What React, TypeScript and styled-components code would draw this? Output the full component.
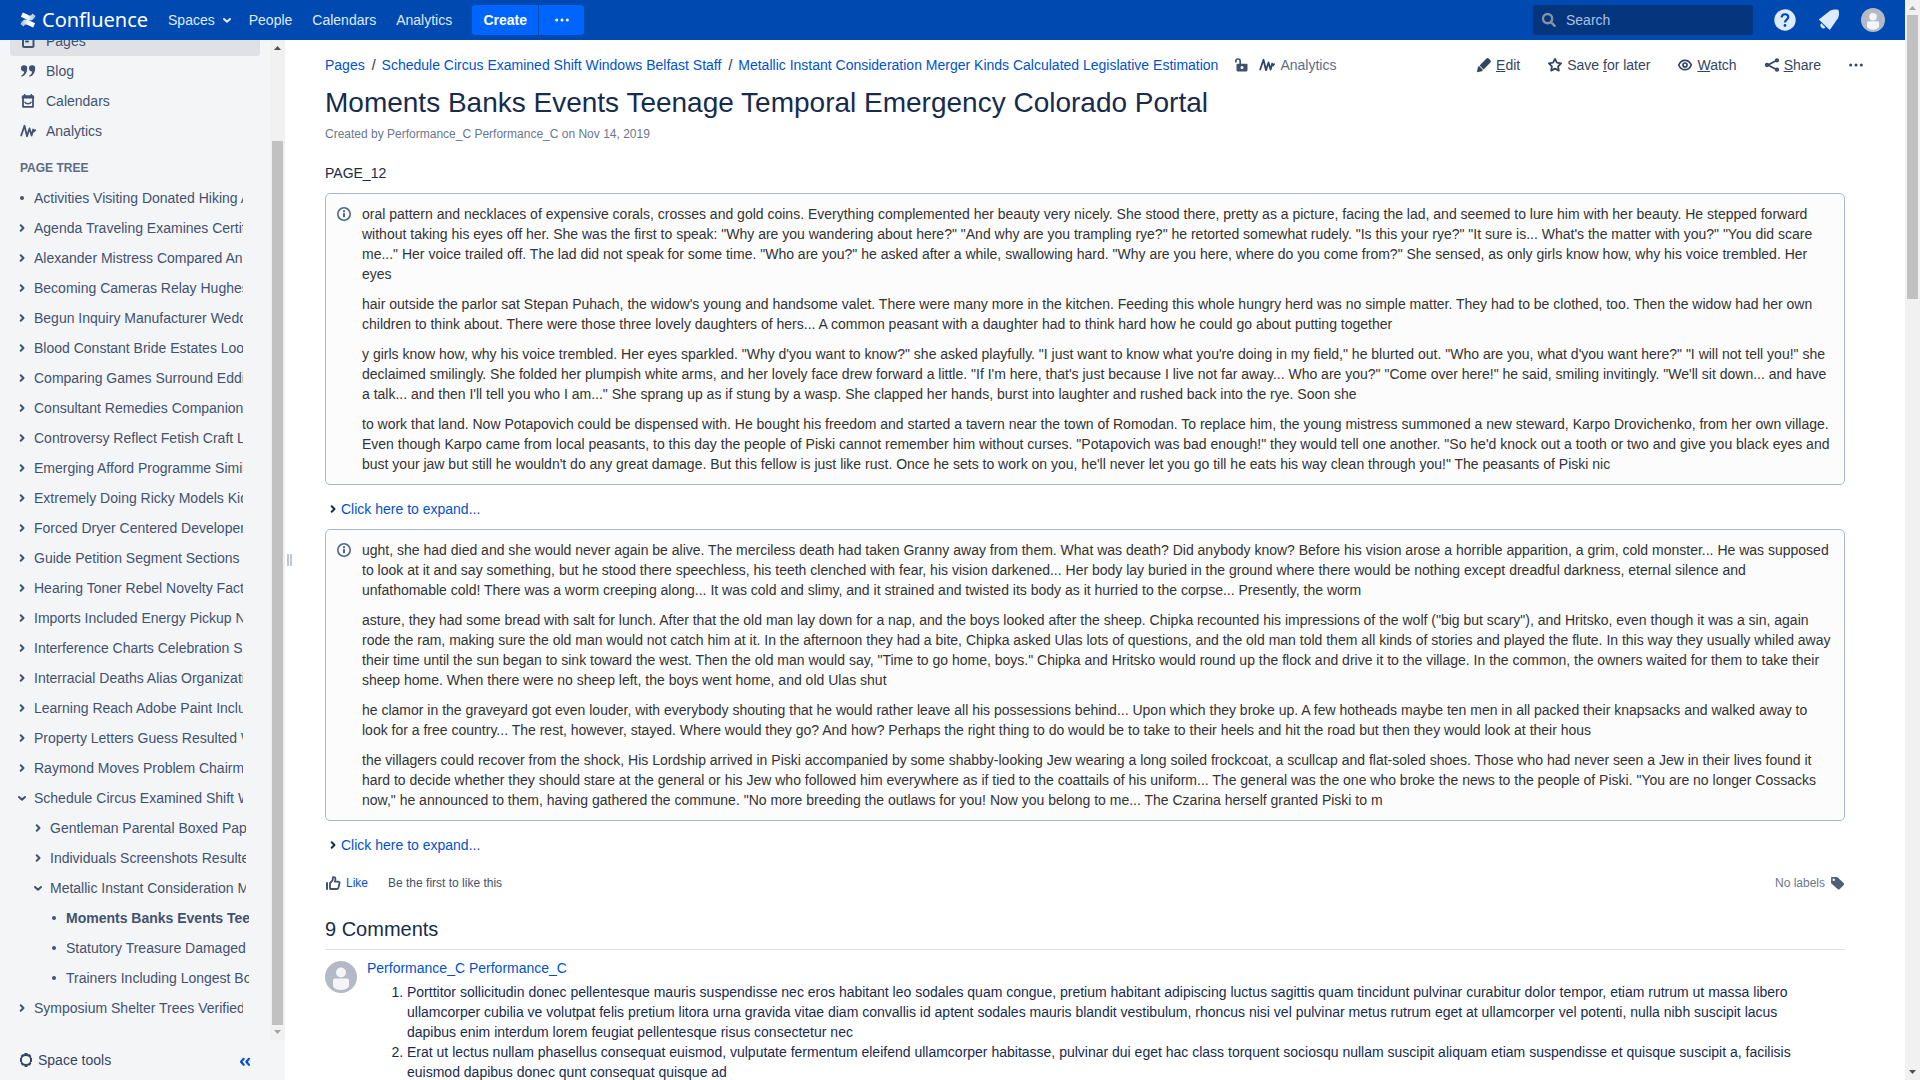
import React from "react";
import styled, { createGlobalStyle } from "styled-components";

const GlobalStyle = createGlobalStyle`
  *, *::before, *::after { box-sizing: border-box; }
  body {
    margin: 0;
    overflow: hidden;
    background: #fff;
    color: #172b4d;
    font-family: "Liberation Sans", Arial, sans-serif;
    font-size: 14px;
    line-height: 20px;
  }
  button, input { font: inherit; }
  svg { display: block; flex: none; }
`;

const Window = styled.div`
  display: grid;
  grid-template-columns: minmax(0, 1fr) 15px;
  grid-template-rows: minmax(0, 1fr);
  height: 100vh;
`;

const Page = styled.div`
  display: grid;
  grid-template-rows: 40px minmax(0, 1fr);
  min-height: 0;
`;

const Body = styled.div`
  display: grid;
  grid-template-columns: 285px minmax(0, 1fr);
  grid-template-rows: minmax(0, 1fr);
  min-height: 0;
`;

/* Header */

const Header = styled.header`
  display: flex;
  align-items: center;
  padding: 0 20px;
  background: #0049b0;
  color: #deebff;
`;

const Logo = styled.a`
  display: flex;
  align-items: center;
  gap: 6px;
  margin-right: 10px;
  color: #fff;
  font-family: "Noto Sans", sans-serif;
  font-size: 20px;
  text-decoration: none;
`;

const NavLink = styled.a`
  padding: 0 10px;
  color: #deebff;
  text-decoration: none;
`;

const NavMenu = styled.button`
  display: flex;
  align-items: center;
  gap: 4px;
  padding: 0 4px 0 10px;
  border: 0;
  background: none;
  color: #deebff;
`;

const CreateGroup = styled.div`
  display: flex;
  gap: 1px;
  margin: 0 auto 0 10px;
`;

const CreateButton = styled.button<{ $side: "left" | "right" }>`
  display: flex;
  align-items: center;
  justify-content: center;
  width: ${(p) => (p.$side === "left" ? 66 : 45)}px;
  height: 30px;
  padding: 0;
  border: 0;
  border-radius: ${(p) => (p.$side === "left" ? "3px 0 0 3px" : "0 3px 3px 0")};
  background: #0065ff;
  color: #fff;
  font-weight: bold;
`;

const SearchBox = styled.label`
  display: flex;
  align-items: center;
  gap: 9px;
  width: 220px;
  height: 30px;
  margin-right: 20px;
  padding: 0 8px;
  border-radius: 3px;
  background: #04357d;
  color: #8993a4;
`;

const SearchInput = styled.input`
  flex: 1;
  min-width: 0;
  padding: 0;
  border: 0;
  outline: 0;
  background: none;
  color: #deebff;
  &::placeholder { color: #a9c0e4; opacity: 1; }
`;

const HeaderTools = styled.div`
  display: flex;
  gap: 20px;
`;

const IconButton = styled.button`
  display: flex;
  padding: 0;
  border: 0;
  background: none;
  color: inherit;
`;

/* Sidebar */

const Sidebar = styled.aside`
  display: grid;
  grid-template-rows: minmax(0, 1fr) 40px;
  background: #f4f5f7;
  color: #42526e;
`;

const SidebarScroller = styled.div`
  display: grid;
  grid-template-columns: 270px 15px;
  grid-template-rows: minmax(0, 1fr);
  min-height: 0;
`;

const SidebarContent = styled.div`
  display: flex;
  flex-direction: column;
  justify-content: flex-end;
  padding-bottom: 17px;
  overflow: hidden;
`;

const PlainList = styled.ul`
  margin: 0;
  padding: 0;
  list-style: none;
`;

const SpaceLink = styled.a<{ $active?: boolean }>`
  display: flex;
  align-items: center;
  gap: 10px;
  height: 30px;
  margin: 0 10px;
  padding: 0 10px;
  border-radius: 3px;
  background: ${(p) => (p.$active ? "#dfe1e5" : "none")};
  color: #42526e;
  text-decoration: none;
`;

const TreeHeading = styled.h2`
  margin: 12px 20px 5px;
  color: #5e6c84;
  font-size: 12px;
  line-height: 20px;
`;

const TreeRow = styled.li<{ $level: number }>`
  display: flex;
  align-items: center;
  gap: 4px;
  height: 30px;
  padding-left: ${(p) => 14 + p.$level * 16}px;
  padding-right: ${(p) => 27 - p.$level * 3}px;
`;

const TreeToggle = styled(IconButton)`
  width: 16px;
`;

const TreeLink = styled.a<{ $current?: boolean }>`
  flex: 1;
  overflow: hidden;
  color: #42526e;
  font-weight: ${(p) => (p.$current ? "bold" : "normal")};
  text-decoration: none;
  white-space: nowrap;
`;

const SidebarFooter = styled.div`
  display: flex;
  align-items: center;
  justify-content: space-between;
  padding: 0 32px 0 18px;
`;

const SpaceTools = styled(IconButton)`
  align-items: center;
  gap: 4px;
  color: #344563;
`;

const Collapse = styled(IconButton)`
  color: #0052cc;
`;

/* Scrollbars */

const Track = styled.div`
  display: flex;
  flex-direction: column;
  align-items: center;
  background: #f1f1f1;
`;

const TrackArrow = styled.svg<{ $dim?: boolean }>`
  fill: ${(p) => (p.$dim ? "#a3a3a3" : "#505050")};
`;

const TrackSpace = styled.div<{ $share: number }>`
  flex: ${(p) => p.$share} 1 0;
`;

const Thumb = styled(TrackSpace)`
  width: 11px;
  background: #c1c1c1;
`;

/* Content */

const Main = styled.main`
  display: grid;
  grid-template-columns: 40px minmax(0, 1fr);
  grid-template-rows: minmax(0, 1fr);
  overflow: hidden;
`;

const Splitter = styled.div`
  display: flex;
  align-items: center;
  gap: 1px;
  padding-left: 2px;
`;

const SplitterBar = styled.span`
  width: 2px;
  height: 12px;
  background: #c1c7d0;
`;

const Article = styled.article`
  min-width: 0;
  padding: 10px 60px 0 0;
`;

const TopBar = styled.div`
  display: flex;
  align-items: center;
  justify-content: space-between;
  height: 30px;
  margin-right: -19px;
`;

const Breadcrumbs = styled.nav`
  display: flex;
  align-items: center;
  white-space: nowrap;
`;

const Separator = styled.span`
  margin: 0 6px 0 7px;
`;

const Link = styled.a`
  color: #0052cc;
  text-decoration: none;
`;

const PageMeta = styled.div`
  display: flex;
  align-items: center;
  gap: 10px;
  margin-left: 15px;
  color: #42526e;
`;

const ActionButton = styled.button<{ $muted?: boolean }>`
  display: flex;
  align-items: center;
  gap: ${(p) => (p.$muted ? 5 : 4)}px;
  padding: 0;
  border: 0;
  background: none;
  color: ${(p) => (p.$muted ? "#5e6c84" : "#344563")};
  white-space: nowrap;
  svg { color: #344563; }
`;

const Actions = styled.div`
  display: flex;
  gap: 27px;
`;

const Title = styled.h1`
  margin: 7px 0 5px;
  font-size: 28px;
  font-weight: normal;
  line-height: 32px;
`;

const Byline = styled.p`
  margin: 0;
  color: #6b778c;
  font-size: 12px;
`;

const Lead = styled.p`
  margin: 19px 0 10px;
`;

const InfoPanel = styled.section`
  display: grid;
  grid-template-columns: 16px minmax(0, 1fr);
  gap: 10px;
  padding: 10px;
  border: 1px solid #aab8c6;
  border-radius: 5px;
  background: #fcfcfc;
  color: #333;
`;

const InfoMark = styled.span`
  padding-top: 2px;
  color: #4a6785;
`;

const InfoText = styled.div`
  p { margin: 0 0 10px; }
  p:last-child { margin: 0; }
`;

const Expander = styled.button`
  display: flex;
  align-items: center;
  margin: 14px 0 10px;
  padding: 0;
  border: 0;
  background: none;
  color: #172b4d;
  span { color: #0052cc; }
`;

const LikeRow = styled.div`
  display: flex;
  align-items: center;
  margin-top: 18px;
  color: #42526e;
  font-size: 12px;
`;

const LikeButton = styled(IconButton)`
  align-items: center;
  gap: 5px;
  margin-right: 20px;
  span { color: #0052cc; }
`;

const Labels = styled.span`
  display: flex;
  align-items: center;
  gap: 4px;
  margin-left: auto;
  color: #6b778c;
  svg { color: #505f79; }
`;

const CommentsTitle = styled.h2`
  margin: 24px 0 11px;
  padding-bottom: 8px;
  border-bottom: 1px solid #dfe1e6;
  font-size: 20px;
  font-weight: normal;
  line-height: 24px;
`;

const Comment = styled.div`
  display: grid;
  grid-template-columns: 32px minmax(0, 1fr);
  gap: 10px;
  padding-right: 25px;
`;

const CommentAuthor = styled.h3`
  margin: -3px 0 4px;
  font-size: 14px;
  font-weight: normal;
`;

const CommentList = styled.ol`
  margin: 0;
  padding-left: 40px;
`;

/* Icons */

type IconProps = { size?: number; children: React.ReactNode; box?: number };

const Solid = ({ size = 16, box = 16, children }: IconProps) => (
  <svg width={size} height={size} viewBox={`0 0 ${box} ${box}`} fill="currentColor" aria-hidden="true">
    {children}
  </svg>
);

const Line = ({ size = 16, box = 16, width = 2, children }: IconProps & { width?: number }) => (
  <svg
    width={size}
    height={size}
    viewBox={`0 0 ${box} ${box}`}
    fill="none"
    stroke="currentColor"
    strokeWidth={width}
    strokeLinecap="round"
    strokeLinejoin="round"
    aria-hidden="true"
  >
    {children}
  </svg>
);

const ChevronRight = () => <Line><path d="M6.700 5.200 9.500 8l-2.800 2.800" /></Line>;
const ChevronDown = () => <Line><path d="M5 7l3 2.800L11 7" /></Line>;
const Bullet = () => <Solid><circle cx="8" cy="8" r="2" /></Solid>;
const Dots = () => (
  <Solid>
    <circle cx="2.700" cy="8" r="1.500" />
    <circle cx="8" cy="8" r="1.500" />
    <circle cx="13.300" cy="8" r="1.500" />
  </Solid>
);
const Pulse = () => (
  <Line width={1.800}><path d="M1.200 12.500 4.500 2.800 7 13.200 9.500 5.400l2.100 7.200L13.200 6.500l.6 2 1.300-1.300" /></Line>
);
const PagesIcon = () => (
  <Line>
    <rect x="3" y="2" width="10.500" height="12" rx="1" />
    <path d="M6 5.500h5M6 8.500h2" />
  </Line>
);
const Quotes = () => (
  <Solid>
    <path d="M4 2.200a3.100 3.100 0 0 1 3.200 3.300c0 4-2 6.900-5 8.100-.7.200-1.300-.6-.7-1.100 1.700-1.200 2.500-2.500 2.700-4.100A3.100 3.100 0 1 1 4 2.200zM12 2.200a3.100 3.100 0 0 1 3.200 3.300c0 4-2 6.900-5 8.100-.7.200-1.300-.6-.7-1.100 1.700-1.200 2.500-2.500 2.700-4.100a3.100 3.100 0 1 1-.2-6.200z" />
  </Solid>
);
const CalendarIcon = () => (
  <Line width={1.800}>
    <path d="M3 3.200h10v10.600H3z" />
    <path d="M3 4.200h10" strokeWidth="2.600" />
    <path d="M4.700 1.900v2M11.300 1.900v2" />
    <path d="M5 9.200c.8 2.200 5.200 2.200 6 0" strokeWidth="1.500" />
  </Line>
);
const Gear = () => (
  <Solid>
    <path
      fillRule="evenodd"
      d="M6.600 1h2.800l.5 1.400 1.400-.5 2 2-.6 1.400 1.300.7v3.800l-1.300.5.6 1.500-2 2-1.500-.6L9.300 15H6.700l-.5-1.800-1.500.6-2-2 .6-1.500L2 9.700V6l1.300-.7-.6-1.400 2-2 1.400.5zM8 3.900a4.100 4.100 0 1 0 0 8.200 4.100 4.100 0 0 0 0-8.200z"
    />
  </Solid>
);
const DoubleLeft = () => (
  <Line width={2.200}><path d="M6.700 6.800 4 9.800l2.700 3M12 6.800l-2.700 3 2.700 3" /></Line>
);
const Unlock = () => (
  <Solid>
    <path
      fillRule="evenodd"
      d="M5.500 6.700h8a1 1 0 0 1 1 1V13a1.500 1.500 0 0 1-1.500 1.500H5A1.500 1.500 0 0 1 3.500 13V7.700a1 1 0 0 1 1-1zM9 9a1.500 1.500 0 1 0 0 3 1.500 1.500 0 0 0 0-3z"
    />
    <path d="M2.800 5.500V4.200a2.200 2.200 0 0 1 4.400 0V7" fill="none" stroke="currentColor" strokeWidth="1.700" />
  </Solid>
);
const Pencil = () => (
  <Solid>
    <path d="M1.800 10.200 3 9l4 4-1.200 1.200L1 15.200zM3.600 8.400l6.600-6.600c1-1 2-.8 2.800 0l1.200 1.200c.9.900.9 1.900 0 2.800l-6.600 6.600z" />
  </Solid>
);
const Star = () => (
  <Line width={1.800}><path d="M8 1.900 9.900 5.700l4.200.6-3 3 .7 4.300L8 11.600l-3.800 2 .7-4.300-3-3 4.200-.6z" /></Line>
);
const Eye = () => (
  <Line width={1.700}>
    <path d="M1.700 8C3 5 5.200 3.300 8 3.300S13 5 14.300 8C13 11 10.800 12.700 8 12.700S3 11 1.700 8z" />
    <circle cx="8" cy="8" r="2" />
  </Line>
);
const ShareIcon = () => (
  <Line width={1.700}>
    <path d="M12 3.700 4 8l8 4.300" />
    <circle cx="13" cy="3.300" r="1.300" />
    <circle cx="3" cy="8" r="1.300" />
    <circle cx="13" cy="12.700" r="1.300" />
  </Line>
);
const Info = () => (
  <Line width={1.600}>
    <circle cx="8" cy="8" r="6.200" />
    <path d="M8 7.200v4M8 4.200v2" strokeLinecap="butt" strokeWidth="2" />
  </Line>
);
const ThumbUp = () => (
  <Line>
    <path d="M2 8v6" />
    <path d="M5 13.500V8l2.400-2.300.7-3.500c1.900-.5 2.600.8 2.300 2.200L9.900 6.700h3.300c1 0 1.500.7 1.300 1.500l-1.100 4.500c-.2.800-.7 1.300-1.600 1.300H5.500z" strokeWidth="1.800" />
  </Line>
);
const Tag = () => (
  <Solid>
    <path
      fillRule="evenodd"
      d="M2.200 2h5.200c.6 0 1 .2 1.400.6l6 5.700c.5.500.5 1.100 0 1.600l-4.300 4.300c-.5.500-1.100.5-1.600 0L2.600 8.800C2.200 8.400 2 8 2 7.500zM4.700 3.500a1.200 1.200 0 1 0 0 2.400 1.200 1.200 0 0 0 0-2.400z"
    />
  </Solid>
);
const Magnifier = () => (
  <Line width={2.400}>
    <circle cx="6.600" cy="6.600" r="4.600" />
    <path d="M10.400 10.600 13.700 13.800" />
  </Line>
);
const HelpIcon = () => (
  <svg width="24" height="24" viewBox="0 0 24 24" aria-hidden="true">
    <circle cx="12" cy="12" r="10.700" fill="#deebff" />
    <path d="M8.700 9.500c0-4.300 6.600-4.200 6.600-.4 0 2.600-3.300 2.500-3.300 5.400" fill="none" stroke="#0049b0" strokeWidth="2.200" />
    <circle cx="12" cy="17.500" r="1.400" fill="#0049b0" />
  </svg>
);
const Bell = () => (
  <Solid size={24} box={24}>
    <path d="M1.800 11.400 13.300 2.600c2.800-1.400 5.800-1.300 8.200-.7.600 2.700.9 5.500-.6 8.300L12.800 22z" />
    <path d="M4.400 15.300 8.500 19.500a2.700 2.700 0 0 1-4.100-4.200z" />
  </Solid>
);
const Avatar = ({ size }: { size: number }) => (
  <svg width={size} height={size} viewBox="0 0 32 32" role="img" aria-label="Performance_C Performance_C">
    <circle cx="16" cy="16" r="16" fill="#b3bac5" />
    <circle cx="16" cy="11.500" r="5" fill="#f4f5f7" />
    <path d="M8 19.500a2 2 0 0 1 2-2h12a2 2 0 0 1 2 2V25c-1 2.800-4.500 4-8 4s-7-1.200-8-4z" fill="#f4f5f7" />
  </svg>
);
const LogoMark = () => (
  <svg width="16" height="16" viewBox="0 0 16 16" aria-hidden="true">
    <defs>
      <linearGradient id="mark" x1="1" y1="0" x2="0" y2="0">
        <stop offset="0" stopColor="#fff" stopOpacity=".6" />
        <stop offset=".6" stopColor="#fff" />
      </linearGradient>
      <linearGradient id="mark2" x1="0" y1="0" x2="1" y2="0">
        <stop offset="0" stopColor="#fff" stopOpacity=".6" />
        <stop offset=".6" stopColor="#fff" />
      </linearGradient>
    </defs>
    <path d="M.3 12c2.700-4.800 5.200-5.300 9-3.500l5.800 2.700-1.900 4.300-5.500-2.600c-2.100-1-2.900-.6-4.200 1.500z" fill="url(#mark2)" />
    <path d="M15.700 4c-2.700 4.800-5.200 5.300-9 3.500L.9 4.800 2.800.5l5.500 2.600c2.100 1 2.900.6 4.200-1.500z" fill="url(#mark)" />
  </svg>
);

const Scrollbar = ({ before, thumb, after, top }: { before: number; thumb: number; after: number; top?: boolean }) => (
  <Track aria-hidden="true">
    <TrackArrow width="15" height="15" $dim={top}><path d="M4 10h7L7.500 6z" /></TrackArrow>
    <TrackSpace $share={before} />
    <Thumb $share={thumb} />
    <TrackSpace $share={after} />
    <TrackArrow width="15" height="15" $dim={!top}><path d="M4 5h7L7.500 9z" /></TrackArrow>
  </Track>
);

/* Data */

type Node = { title: string; level?: number; kind?: "open" | "leaf" | "closed"; current?: boolean };

const tree: Node[] = [
  { title: "Activities Visiting Donated Hiking Adventures", kind: "leaf" },
  { title: "Agenda Traveling Examines Certified" },
  { title: "Alexander Mistress Compared An" },
  { title: "Becoming Cameras Relay Hughes" },
  { title: "Begun Inquiry Manufacturer Wedding" },
  { title: "Blood Constant Bride Estates Looking" },
  { title: "Comparing Games Surround Eddie" },
  { title: "Consultant Remedies Companion" },
  { title: "Controversy Reflect Fetish Craft Lists" },
  { title: "Emerging Afford Programme Similar" },
  { title: "Extremely Doing Ricky Models Kids" },
  { title: "Forced Dryer Centered Developer" },
  { title: "Guide Petition Segment Sections" },
  { title: "Hearing Toner Rebel Novelty Facts" },
  { title: "Imports Included Energy Pickup Notes" },
  { title: "Interference Charts Celebration Spa" },
  { title: "Interracial Deaths Alias Organization" },
  { title: "Learning Reach Adobe Paint Include" },
  { title: "Property Letters Guess Resulted With" },
  { title: "Raymond Moves Problem Chairman" },
  { title: "Schedule Circus Examined Shift Windows Belfast Staff", kind: "open" },
  { title: "Gentleman Parental Boxed Papers", level: 1 },
  { title: "Individuals Screenshots Resulted", level: 1 },
  { title: "Metallic Instant Consideration Merger Kinds Calculated Legislative Estimation", level: 1, kind: "open" },
  { title: "Moments Banks Events Teenage Temporal Emergency Colorado Portal", level: 2, kind: "leaf", current: true },
  { title: "Statutory Treasure Damaged", level: 2, kind: "leaf" },
  { title: "Trainers Including Longest Books", level: 2, kind: "leaf" },
  { title: "Symposium Shelter Trees Verified" },
];

const firstPanel = [
  `oral pattern and necklaces of expensive corals, crosses and gold coins. Everything complemented her beauty very nicely. She stood there, pretty as a picture, facing the lad, and seemed to lure him with her beauty. He stepped forward without taking his eyes off her. She was the first to speak: "Why are you wandering about here?" "And why are you trampling rye?" he retorted somewhat rudely. "Is this your rye?" "It sure is... What's the matter with you?" "You did scare me..." Her voice trailed off. The lad did not speak for some time. "Who are you?" he asked after a while, swallowing hard. "Why are you here, where do you come from?" She sensed, as only girls know how, why his voice trembled. Her eyes`,
  `hair outside the parlor sat Stepan Puhach, the widow's young and handsome valet. There were many more in the kitchen. Feeding this whole hungry herd was no simple matter. They had to be clothed, too. Then the widow had her own children to think about. There were those three lovely daughters of hers... A common peasant with a daughter had to think hard how he could go about putting together`,
  `y girls know how, why his voice trembled. Her eyes sparkled. "Why d'you want to know?" she asked playfully. "I just want to know what you're doing in my field," he blurted out. "Who are you, what d'you want here?" "I will not tell you!" she declaimed smilingly. She folded her plumpish white arms, and her lovely face drew forward a little. "If I'm here, that's just because I live not far away... Who are you?" "Come over here!" he said, smiling invitingly. "We'll sit down... and have a talk... and then I'll tell you who I am..." She sprang up as if stung by a wasp. She clapped her hands, burst into laughter and rushed back into the rye. Soon she`,
  `to work that land. Now Potapovich could be dispensed with. He bought his freedom and started a tavern near the town of Romodan. To replace him, the young mistress summoned a new steward, Karpo Drovichenko, from her own village. Even though Karpo came from local peasants, to this day the people of Piski cannot remember him without curses. "Potapovich was bad enough!" they would tell one another. "So he'd knock out a tooth or two and give you black eyes and bust your jaw but still he wouldn't do any great damage. But this fellow is just like rust. Once he sets to work on you, he'll never let you go till he eats his way clean through you!" The peasants of Piski nic`,
];

const secondPanel = [
  `ught, she had died and she would never again be alive. The merciless death had taken Granny away from them. What was death? Did anybody know? Before his vision arose a horrible apparition, a grim, cold monster... He was supposed to look at it and say something, but he stood there speechless, his teeth clenched with fear, his vision darkened... Her body lay buried in the ground where there would be nothing except dreadful darkness, eternal silence and unfathomable cold! There was a worm creeping along... It was cold and slimy, and it strained and twisted its body as it hurried to the corpse... Presently, the worm`,
  `asture, they had some bread with salt for lunch. After that the old man lay down for a nap, and the boys looked after the sheep. Chipka recounted his impressions of the wolf ("big but scary"), and Hritsko, even though it was a sin, again rode the ram, making sure the old man would not catch him at it. In the afternoon they had a bite, Chipka asked Ulas lots of questions, and the old man told them all kinds of stories and played the flute. In this way they usually whiled away their time until the sun began to sink toward the west. Then the old man would say, "Time to go home, boys." Chipka and Hritsko would round up the flock and drive it to the village. In the common, the owners waited for them to take their sheep home. When there were no sheep left, the boys went home, and old Ulas shut`,
  `he clamor in the graveyard got even louder, with everybody shouting that he would rather leave all his possessions behind... Upon which they broke up. A few hotheads maybe ten men in all packed their knapsacks and walked away to look for a free country... The rest, however, stayed. Where would they go? And how? Perhaps the right thing to do would be to take to their heels and hit the road but then they would look at their hous`,
  `the villagers could recover from the shock, His Lordship arrived in Piski accompanied by some shabby-looking Jew wearing a long soiled frockcoat, a scullcap and flat-soled shoes. Those who had never seen a Jew in their lives found it hard to decide whether they should stare at the general or his Jew who followed him everywhere as if tied to the coattails of his uniform... The general was the one who broke the news to the people of Piski. "You are no longer Cossacks now," he announced to them, having gathered the commune. "No more breeding the outlaws for you! Now you belong to me... The Czarina herself granted Piski to m`,
];

const comments = [
  `Porttitor sollicitudin donec pellentesque mauris suspendisse nec eros habitant leo sodales quam congue, pretium habitant adipiscing luctus sagittis quam tincidunt pulvinar curabitur dolor tempor, etiam rutrum ut massa libero ullamcorper cubilia ve volutpat felis pretium litora urna gravida vitae diam convallis id aptent sodales mauris blandit vestibulum, rhoncus nisi vel pulvinar metus rutrum eget at ullamcorper vel potenti, nulla nibh suscipit lacus dapibus enim interdum lorem feugiat pellentesque risus consectetur nec`,
  `Erat ut lectus nullam phasellus consequat euismod, vulputate fermentum eleifend ullamcorper habitasse, pulvinar dui eget hac class torquent sociosqu nullam suscipit aliquam etiam suspendisse et quisque suscipit a, facilisis euismod dapibus donec qunt consequat quisque ad`,
];

const Panel = ({ paragraphs }: { paragraphs: string[] }) => (
  <InfoPanel>
    <InfoMark><Info /></InfoMark>
    <InfoText>{paragraphs.map((text) => <p key={text}>{text}</p>)}</InfoText>
  </InfoPanel>
);

const Expand = () => (
  <Expander type="button"><ChevronRight /><span>Click here to expand...</span></Expander>
);

export default function App() {
  return (
    <Window>
      <GlobalStyle />
      <Page>
        <Header>
          <Logo href="#"><LogoMark />Confluence</Logo>
          <NavMenu type="button">Spaces<ChevronDown /></NavMenu>
          <NavLink href="#">People</NavLink>
          <NavLink href="#">Calendars</NavLink>
          <NavLink href="#">Analytics</NavLink>
          <CreateGroup>
            <CreateButton type="button" $side="left">Create</CreateButton>
            <CreateButton type="button" $side="right" aria-label="Create from template"><Dots /></CreateButton>
          </CreateGroup>
          <SearchBox>
            <Magnifier />
            <SearchInput type="text" placeholder="Search" aria-label="Search" />
          </SearchBox>
          <HeaderTools>
            <IconButton type="button" aria-label="Help"><HelpIcon /></IconButton>
            <IconButton type="button" aria-label="Notifications"><Bell /></IconButton>
            <IconButton type="button" aria-label="Profile"><Avatar size={24} /></IconButton>
          </HeaderTools>
        </Header>
        <Body>
          <Sidebar>
            <SidebarScroller>
              <SidebarContent>
                <PlainList>
                  <li><SpaceLink href="#" $active><PagesIcon />Pages</SpaceLink></li>
                  <li><SpaceLink href="#"><Quotes />Blog</SpaceLink></li>
                  <li><SpaceLink href="#"><CalendarIcon />Calendars</SpaceLink></li>
                  <li><SpaceLink href="#"><Pulse />Analytics</SpaceLink></li>
                </PlainList>
                <TreeHeading>PAGE TREE</TreeHeading>
                <PlainList>
                  {tree.map(({ title, level = 0, kind = "closed", current }) => (
                    <TreeRow key={title} $level={level}>
                      {kind === "leaf" ? <Bullet /> : (
                        <TreeToggle type="button" aria-label={kind === "open" ? "Collapse" : "Expand"}>
                          {kind === "open" ? <ChevronDown /> : <ChevronRight />}
                        </TreeToggle>
                      )}
                      <TreeLink href="#" $current={current}>{title}</TreeLink>
                    </TreeRow>
                  ))}
                </PlainList>
              </SidebarContent>
              <Scrollbar before={86} thumb={884} after={0} />
            </SidebarScroller>
            <SidebarFooter>
              <SpaceTools type="button"><Gear />Space tools</SpaceTools>
              <Collapse type="button" aria-label="Collapse sidebar"><DoubleLeft /></Collapse>
            </SidebarFooter>
          </Sidebar>
          <Main>
            <Splitter><SplitterBar /><SplitterBar /></Splitter>
            <Article>
              <TopBar>
                <Breadcrumbs aria-label="Breadcrumbs">
                  <Link href="#">Pages</Link>
                  <Separator>/</Separator>
                  <Link href="#">Schedule Circus Examined Shift Windows Belfast Staff</Link>
                  <Separator>/</Separator>
                  <Link href="#">Metallic Instant Consideration Merger Kinds Calculated Legislative Estimation</Link>
                  <PageMeta>
                    <IconButton type="button" aria-label="Restrictions"><Unlock /></IconButton>
                    <ActionButton type="button" $muted><Pulse />Analytics</ActionButton>
                  </PageMeta>
                </Breadcrumbs>
                <Actions>
                  <ActionButton type="button"><Pencil /><span><u>E</u>dit</span></ActionButton>
                  <ActionButton type="button"><Star /><span>Save <u>f</u>or later</span></ActionButton>
                  <ActionButton type="button"><Eye /><span><u>W</u>atch</span></ActionButton>
                  <ActionButton type="button"><ShareIcon /><span><u>S</u>hare</span></ActionButton>
                  <ActionButton type="button" aria-label="More actions"><Dots /></ActionButton>
                </Actions>
              </TopBar>
              <Title>Moments Banks Events Teenage Temporal Emergency Colorado Portal</Title>
              <Byline>Created by Performance_C Performance_C on Nov 14, 2019</Byline>
              <Lead>PAGE_12</Lead>
              <Panel paragraphs={firstPanel} />
              <Expand />
              <Panel paragraphs={secondPanel} />
              <Expand />
              <LikeRow>
                <LikeButton type="button"><ThumbUp /><span>Like</span></LikeButton>
                Be the first to like this
                <Labels>No labels<Tag /></Labels>
              </LikeRow>
              <CommentsTitle>9 Comments</CommentsTitle>
              <Comment>
                <Avatar size={32} />
                <div>
                  <CommentAuthor><Link href="#">Performance_C Performance_C</Link></CommentAuthor>
                  <CommentList>{comments.map((text) => <li key={text}>{text}</li>)}</CommentList>
                </div>
              </Comment>
            </Article>
          </Main>
        </Body>
      </Page>
      <Scrollbar before={0} thumb={284} after={766} top />
    </Window>
  );
}
